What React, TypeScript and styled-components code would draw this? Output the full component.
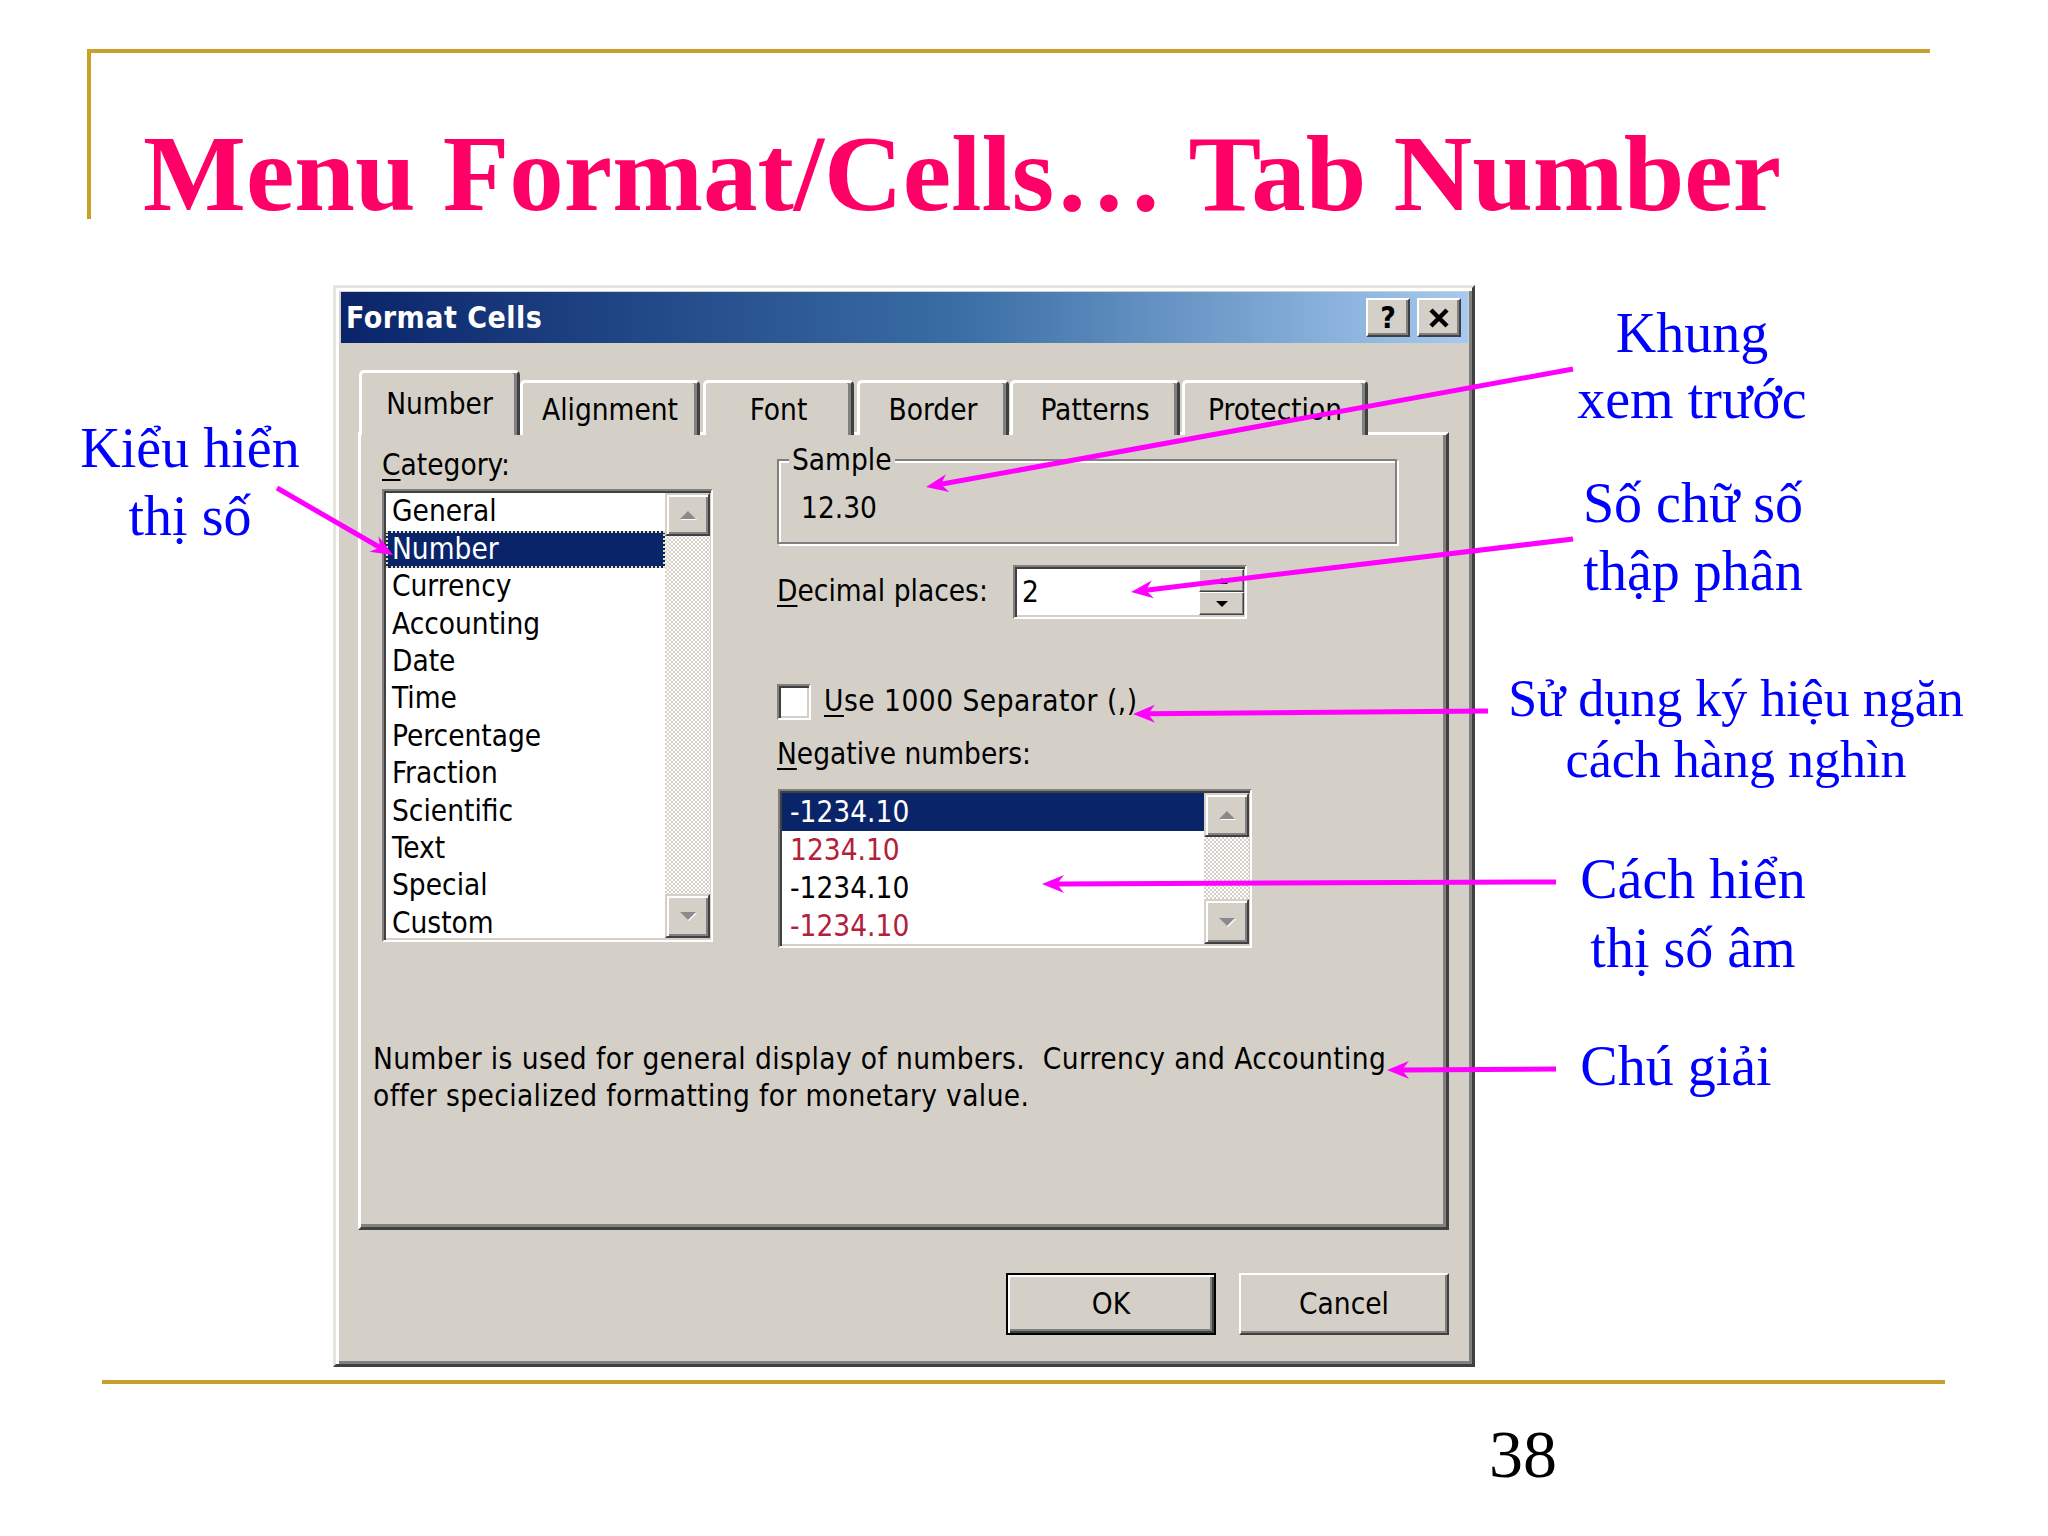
import React from "react";
import styled, { createGlobalStyle } from "styled-components";

const UI_FONT = `"DejaVu Sans Condensed", "DejaVu Sans", sans-serif`;
const SERIF = `"Liberation Serif", "Times New Roman", serif`;
const GOLD = "#c9a02a";
const FACE = "#d4d0c8";

const GlobalStyle = createGlobalStyle`
  html, body { margin: 0; padding: 0; background: #fff; }
  body { width: 2048px; height: 1536px; overflow: hidden; }
`;

const Page = styled.div`
  position: relative;
  width: 2048px;
  height: 1536px;
  background: #fff;
  overflow: hidden;
  font-family: ${SERIF};
`;

const Header = styled.header`
  box-sizing: border-box;
  margin: 49px 0 0 87px;
  width: 1843px;
  height: 170px;
  border-top: 4px solid ${GOLD};
  border-left: 4px solid ${GOLD};
`;

const Title = styled.h1`
  margin: 0;
  padding: 66px 0 0 52px;
  font-family: ${SERIF};
  font-weight: bold;
  font-size: 109px;
  line-height: 109px;
  color: #ff0066;
  white-space: nowrap;
`;

const Body = styled.main`
  display: flex;
  align-items: flex-start;
  margin-top: 66px;
`;

const LeftCol = styled.div`
  width: 333px;
  flex: none;
`;

const RightCol = styled.div`
  flex: 1;
  display: flex;
  flex-direction: column;
  align-items: flex-start;
`;

const Note = styled.div<{ $size: number; $lh: number; $top: number; $left: number; $w: number }>`
  width: ${(p) => p.$w}px;
  margin-top: ${(p) => p.$top}px;
  margin-left: ${(p) => p.$left}px;
  font-family: ${SERIF};
  font-size: ${(p) => p.$size}px;
  line-height: ${(p) => p.$lh}px;
  color: #0000ff;
  text-align: center;
  white-space: nowrap;
`;

const Dialog = styled.div`
  box-sizing: border-box;
  width: 1142px;
  height: 1082px;
  flex: none;
  background: ${FACE};
  border: 3px solid;
  border-color: #e6e4de #404040 #404040 #e6e4de;
  box-shadow: inset 3px 3px 0 #fff, inset -3px -3px 0 #808080;
  padding: 4px 4px 0 5px;
  font-family: ${UI_FONT};
  font-size: 29.5px;
  color: #000;
  display: flex;
  flex-direction: column;
`;

const TitleBar = styled.div`
  height: 51px;
  flex: none;
  display: flex;
  align-items: center;
  justify-content: space-between;
  background: linear-gradient(to right, #0a246a 0%, #3a6ea5 55%, #a6caf0 100%);
  padding: 0 7px 0 5px;
`;

const TitleText = styled.span`
  color: #fff;
  font-weight: bold;
  font-size: 30px;
  letter-spacing: 0.5px;
`;

const CaptionButtons = styled.div`
  display: flex;
  gap: 7px;
`;

const CaptionButton = styled.div`
  box-sizing: border-box;
  width: 44px;
  height: 39px;
  background: ${FACE};
  border: 2px solid;
  border-color: #fff #404040 #404040 #fff;
  box-shadow: inset -2px -2px 0 #808080;
  display: flex;
  align-items: center;
  justify-content: center;
  font-weight: bold;
  font-size: 30px;
  line-height: 1;
`;

const DialogBody = styled.div`
  padding: 27px 19px 0 17px;
  display: flex;
  flex-direction: column;
`;

const TabStrip = styled.div`
  display: flex;
  align-items: flex-end;
  height: 65px;
  padding-left: 1px;
  position: relative;
  z-index: 1;
  margin-bottom: -3px;
`;

const Tab = styled.div<{ $selected?: boolean; $w: number; $gap: number }>`
  box-sizing: border-box;
  width: ${(p) => p.$w}px;
  height: ${(p) => (p.$selected ? 65 : 55)}px;
  margin-left: ${(p) => p.$gap}px;
  background: ${FACE};
  border-top: 3px solid #fff;
  border-left: 3px solid #fff;
  border-right: 3px solid #404040;
  box-shadow: inset -3px 0 0 #808080;
  border-radius: 5px 5px 0 0;
  padding-top: ${(p) => (p.$selected ? 13 : 9)}px;
  line-height: 37.4px;
  text-align: center;
  white-space: nowrap;
`;

const Panel = styled.div`
  box-sizing: border-box;
  height: 798px;
  border: 3px solid;
  border-color: #fff #404040 #404040 #fff;
  box-shadow: inset -3px -3px 0 #808080;
  padding: 12px 0 0 21px;
  display: flex;
  flex-direction: column;
`;

const TopArea = styled.div`
  display: flex;
  align-items: flex-start;
`;

const LeftPane = styled.div`
  width: 331px;
  flex: none;
  display: flex;
  flex-direction: column;
`;

const Label = styled.div<{ $mt?: number }>`
  line-height: 37.4px;
  height: 37.4px;
  margin-top: ${(p) => p.$mt ?? 0}px;
  white-space: pre;
`;

const Key = styled.span`
  text-decoration: underline;
  text-underline-offset: 4px;
  text-decoration-thickness: 2px;
`;

const ListBox = styled.div<{ $w: number; $h: number; $mt: number; $ml?: number }>`
  box-sizing: border-box;
  width: ${(p) => p.$w}px;
  height: ${(p) => p.$h}px;
  margin-top: ${(p) => p.$mt}px;
  margin-left: ${(p) => p.$ml ?? 0}px;
  border: 2px solid;
  border-color: #808080 #fff #fff #808080;
  box-shadow: inset 2px 2px 0 #404040, inset -2px -2px 0 ${FACE};
  background: #fff;
  padding: 2px 1px 2px 2px;
  display: flex;
  overflow: hidden;
`;

const Items = styled.div`
  flex: 1;
  display: flex;
  flex-direction: column;
`;

const Item = styled.div<{ $h: number; $pl: number; $selected?: boolean; $focus?: boolean; $red?: boolean }>`
  flex: none;
  height: ${(p) => p.$h}px;
  line-height: ${(p) => p.$h}px;
  padding-left: ${(p) => p.$pl}px;
  white-space: nowrap;
  background: ${(p) => (p.$selected ? "#0a246a" : "transparent")};
  color: ${(p) => (p.$selected ? "#fff" : p.$red ? "#b3203a" : "#000")};
  outline: ${(p) => (p.$focus ? "2px dotted #e8e2a8" : "none")};
  outline-offset: -2px;
`;

const ScrollBar = styled.div`
  width: 45px;
  flex: none;
  display: flex;
  flex-direction: column;
  background-color: #fff;
  background-image: repeating-conic-gradient(${FACE} 0% 25%, #fff 0% 50%);
  background-size: 4px 4px;
`;

const ScrollButton = styled.div<{ $h: number }>`
  box-sizing: border-box;
  height: ${(p) => p.$h}px;
  flex: none;
  background: ${FACE};
  border: 2px solid;
  border-color: ${FACE} #404040 #404040 ${FACE};
  box-shadow: inset 2px 2px 0 #fff, inset -2px -2px 0 #808080;
  display: flex;
  align-items: center;
  justify-content: center;
`;

const Track = styled.div`
  flex: 1;
`;

const Arrow = styled.div<{ $dir: "up" | "down"; $dark?: boolean; $s?: number }>`
  width: 0;
  height: 0;
  border-left: ${(p) => p.$s ?? 8}px solid transparent;
  border-right: ${(p) => p.$s ?? 8}px solid transparent;
  ${(p) =>
    p.$dir === "up"
      ? `border-bottom: ${p.$s ?? 8}px solid ${p.$dark ? "#000" : "#8a8a8a"};`
      : `border-top: ${p.$s ?? 8}px solid ${p.$dark ? "#000" : "#8a8a8a"};`}
  filter: ${(p) => (p.$dark ? "none" : "drop-shadow(1px 1px 0 #fff)")};
`;

const RightPane = styled.div`
  width: 620px;
  margin-left: 64px;
  margin-top: 12px;
  display: flex;
  flex-direction: column;
`;

const GroupBox = styled.div`
  position: relative;
  box-sizing: border-box;
  height: 85px;
  width: 620px;
  border: 2px solid #808080;
  box-shadow: inset 2px 2px 0 #fff, 2px 2px 0 #fff;
  padding: 29px 0 0 22px;
  line-height: 37.4px;
`;

const GroupLabel = styled.span`
  position: absolute;
  top: -19px;
  left: 10px;
  padding: 0 3px;
  background: ${FACE};
  line-height: 37.4px;
`;

const Row = styled.div<{ $mt: number; $h: number }>`
  display: flex;
  align-items: center;
  margin-top: ${(p) => p.$mt}px;
  height: ${(p) => p.$h}px;
`;

const FieldLabel = styled.div<{ $w?: number; $ls?: number }>`
  width: ${(p) => (p.$w ? `${p.$w}px` : "auto")};
  flex: none;
  line-height: 37.4px;
  letter-spacing: ${(p) => p.$ls ?? 0}px;
  white-space: nowrap;
`;

const SpinBox = styled.div`
  box-sizing: border-box;
  width: 234px;
  height: 54px;
  border: 2px solid;
  border-color: #808080 #fff #fff #808080;
  box-shadow: inset 2px 2px 0 #404040, inset -2px -2px 0 ${FACE};
  background: #fff;
  padding: 2px 1px 2px 2px;
  display: flex;
`;

const SpinValue = styled.div`
  flex: 1;
  padding-left: 5px;
  display: flex;
  align-items: center;
`;

const SpinButtons = styled.div`
  width: 45px;
  display: flex;
  flex-direction: column;
`;

const SpinButton = styled.div`
  box-sizing: border-box;
  flex: 1;
  background: ${FACE};
  border: 1px solid;
  border-color: #fff #404040 #404040 #fff;
  box-shadow: inset -1px -1px 0 #808080;
  display: flex;
  align-items: center;
  justify-content: center;
`;

const CheckBox = styled.div`
  box-sizing: border-box;
  width: 34px;
  height: 36px;
  flex: none;
  border: 2px solid;
  border-color: #808080 #fff #fff #808080;
  box-shadow: inset 2px 2px 0 #404040, inset -2px -2px 0 ${FACE};
  background: #fff;
  margin-right: 13px;
`;

const Description = styled.div`
  margin-top: 93px;
  margin-left: -9px;
  line-height: 37px;
  letter-spacing: 0.4px;
  white-space: pre;
`;

const ButtonRow = styled.div`
  display: flex;
  justify-content: flex-end;
  gap: 23px;
  margin-top: 43px;
`;

const PushButton = styled.div<{ $default?: boolean }>`
  box-sizing: border-box;
  width: 210px;
  height: 62px;
  background: ${FACE};
  border: 2px solid;
  border-color: ${(p) => (p.$default ? "#000" : "#fff #404040 #404040 #fff")};
  box-shadow: ${(p) =>
    p.$default
      ? "inset 2px 2px 0 #fff, inset -2px -2px 0 #404040, inset -4px -4px 0 #808080"
      : "inset -2px -2px 0 #808080"};
  display: flex;
  align-items: center;
  justify-content: center;
`;

const FooterLine = styled.div`
  margin: 13px 0 0 102px;
  width: 1843px;
  height: 4px;
  background: ${GOLD};
`;

const PageNumber = styled.div`
  margin: 36px 0 0 1489px;
  font-family: ${SERIF};
  font-size: 68px;
  line-height: 68px;
  color: #000;
`;

const Overlay = styled.svg`
  position: absolute;
  left: 0;
  top: 0;
  width: 2048px;
  height: 1536px;
  pointer-events: none;
  z-index: 10;
`;

type Seg = [number, number, number, number];

const segments: Seg[] = [
  [1573, 369, 926, 487],
  [1573, 539, 1131, 592],
  [1488, 711, 1133, 714],
  [1556, 882, 1042, 884],
  [1556, 1069, 1387, 1070],
  [277, 488, 393, 555],
];

function arrowGeom([x1, y1, x2, y2]: Seg) {
  const len = 22;
  const half = 9;
  const notch = 7;
  const dx = x2 - x1;
  const dy = y2 - y1;
  const L = Math.hypot(dx, dy);
  const ux = dx / L;
  const uy = dy / L;
  const px = -uy;
  const py = ux;
  const bx = x2 - ux * len;
  const by = y2 - uy * len;
  const nx = x2 - ux * (len - notch);
  const ny = y2 - uy * (len - notch);
  const pts = [
    [x2, y2],
    [bx + px * half, by + py * half],
    [nx, ny],
    [bx - px * half, by - py * half],
  ]
    .map((p) => p.map((v) => v.toFixed(1)).join(","))
    .join(" ");
  return { line: [x1, y1, nx, ny], pts };
}

const categories = [
  "General",
  "Number",
  "Currency",
  "Accounting",
  "Date",
  "Time",
  "Percentage",
  "Fraction",
  "Scientific",
  "Text",
  "Special",
  "Custom",
];

const negatives = [
  { t: "-1234.10", red: false },
  { t: "1234.10", red: true },
  { t: "-1234.10", red: false },
  { t: "-1234.10", red: true },
];

const tabs = [
  { name: "Number", w: 161, gap: 0, sel: true },
  { name: "Alignment", w: 180, gap: 0 },
  { name: "Font", w: 151, gap: 3 },
  { name: "Border", w: 152, gap: 3 },
  { name: "Patterns", w: 170, gap: 1 },
  { name: "Protection", w: 186, gap: 2 },
];

export default function App() {
  return (
    <Page>
      <GlobalStyle />
      <Header>
        <Title>Menu Format/Cells… Tab Number</Title>
      </Header>

      <Body>
        <LeftCol>
          <Note $size={56} $lh={68} $top={129} $left={40} $w={300}>
            Kiểu hiển
            <br />
            thị số
          </Note>
        </LeftCol>

        <Dialog>
          <TitleBar>
            <TitleText>Format Cells</TitleText>
            <CaptionButtons>
              <CaptionButton>?</CaptionButton>
              <CaptionButton>
                <svg width="22" height="20" viewBox="0 0 22 20">
                  <path d="M3 2 L19 18 M19 2 L3 18" stroke="#000" strokeWidth="4.5" />
                </svg>
              </CaptionButton>
            </CaptionButtons>
          </TitleBar>

          <DialogBody>
            <TabStrip>
              {tabs.map((t) => (
                <Tab key={t.name} $selected={t.sel} $w={t.w} $gap={t.gap}>
                  {t.name}
                </Tab>
              ))}
            </TabStrip>
            <Panel>
              <TopArea>
                <LeftPane>
                  <Label>
                    <Key>C</Key>ategory:
                  </Label>
                  <ListBox $w={331} $h={453} $mt={5}>
                    <Items>
                      {categories.map((c) => (
                        <Item
                          key={c}
                          $h={37.4}
                          $pl={6}
                          $selected={c === "Number"}
                          $focus={c === "Number"}
                        >
                          {c}
                        </Item>
                      ))}
                    </Items>
                    <ScrollBar>
                      <ScrollButton $h={43}>
                        <Arrow $dir="up" />
                      </ScrollButton>
                      <Track />
                      <ScrollButton $h={44}>
                        <Arrow $dir="down" />
                      </ScrollButton>
                    </ScrollBar>
                  </ListBox>
                </LeftPane>

                <RightPane>
                  <GroupBox>
                    <GroupLabel>Sample</GroupLabel>
                    12.30
                  </GroupBox>

                  <Row $mt={21} $h={54}>
                    <FieldLabel $w={236}>
                      <Key>D</Key>ecimal places:
                    </FieldLabel>
                    <SpinBox>
                      <SpinValue>2</SpinValue>
                      <SpinButtons>
                        <SpinButton>
                          <Arrow $dir="up" $dark $s={6} />
                        </SpinButton>
                        <SpinButton>
                          <Arrow $dir="down" $dark $s={6} />
                        </SpinButton>
                      </SpinButtons>
                    </SpinBox>
                  </Row>

                  <Row $mt={64} $h={37}>
                    <CheckBox />
                    <FieldLabel $ls={0.5}>
                      <Key>U</Key>se 1000 Separator (,)
                    </FieldLabel>
                  </Row>

                  <Label $mt={16}>
                    <Key>N</Key>egative numbers:
                  </Label>

                  <ListBox $w={474} $h={159} $mt={16} $ml={1}>
                    <Items>
                      {negatives.map((n, i) => (
                        <Item key={i} $h={38} $pl={8} $selected={i === 0} $red={n.red}>
                          {n.t}
                        </Item>
                      ))}
                    </Items>
                    <ScrollBar>
                      <ScrollButton $h={44}>
                        <Arrow $dir="up" />
                      </ScrollButton>
                      <Track />
                      <ScrollButton $h={45}>
                        <Arrow $dir="down" />
                      </ScrollButton>
                    </ScrollBar>
                  </ListBox>
                </RightPane>
              </TopArea>

              <Description>
                {"Number is used for general display of numbers.  Currency and Accounting\noffer specialized formatting for monetary value."}
              </Description>
            </Panel>

            <ButtonRow>
              <PushButton $default>OK</PushButton>
              <PushButton>Cancel</PushButton>
            </ButtonRow>
          </DialogBody>
        </Dialog>

        <RightCol>
          <Note $size={56} $lh={66} $top={15} $left={17} $w={400}>
            Khung
            <br />
            xem trước
          </Note>
          <Note $size={56} $lh={68} $top={37} $left={18} $w={400}>
            Số chữ số
            <br />
            thập phân
          </Note>
          <Note $size={52} $lh={61} $top={63} $left={21} $w={480}>
            Sử dụng ký hiệu ngăn
            <br />
            cách hàng nghìn
          </Note>
          <Note $size={56} $lh={69} $top={55} $left={18} $w={400}>
            Cách hiển
            <br />
            thị số âm
          </Note>
          <Note $size={56} $lh={66} $top={50} $left={1} $w={400}>
            Chú giải
          </Note>
        </RightCol>
      </Body>

      <FooterLine />
      <PageNumber>38</PageNumber>

      <Overlay viewBox="0 0 2048 1536">
        {segments.map((s, i) => {
          const g = arrowGeom(s);
          return (
            <g key={i}>
              <line
                x1={g.line[0]}
                y1={g.line[1]}
                x2={g.line[2]}
                y2={g.line[3]}
                stroke="#ff00ff"
                strokeWidth={5}
              />
              <polygon points={g.pts} fill="#ff00ff" />
            </g>
          );
        })}
      </Overlay>
    </Page>
  );
}
